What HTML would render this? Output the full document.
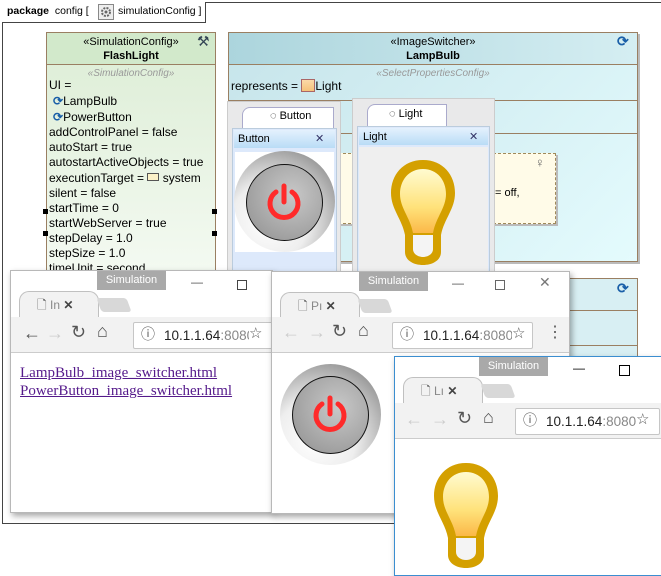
<!DOCTYPE html>
<html><head><meta charset="utf-8"><style>
*{box-sizing:border-box;margin:0;padding:0}
body{width:661px;height:572px;background:#fff;position:relative;overflow:hidden;font-family:"Liberation Sans",sans-serif;font-size:12px;color:#000}
.a{position:absolute}
.t{position:absolute;white-space:nowrap;font-size:12px;line-height:15px}
.win{position:absolute;background:#fff;border:1px solid #b8b8b8;box-shadow:2px 3px 6px rgba(0,0,0,.35);overflow:hidden}
.sim{position:absolute;background:#a9a9a9;color:#fff;font-size:11px;height:19px;line-height:19px;text-align:center;width:69px}
.tb{position:absolute;left:0;right:0;height:36px;background:#f2f2f2;border-bottom:1px solid #ccc}
.addr{position:absolute;height:27px;background:#fff;border:1px solid #c6c6c6;border-radius:2px;font-size:13.5px;line-height:25px;padding-left:30px;color:#222}
</style></head><body>

<!-- package frame -->
<div class="a" style="left:2px;top:2px;width:660px;height:522px;border:1px solid #444"></div>
<div class="a" style="left:2px;top:2px;width:204px;height:21px;border-right:1px solid #444;border-bottom:1px solid #444;background:#fff"></div>
<div class="t" style="left:7px;top:4px;font-size:10.5px"><b>package</b>&nbsp; config [</div>
<div class="a" style="left:98px;top:4px;width:16px;height:16px;border:1px solid #888;background:#eee"></div>
<svg class="a" style="left:100px;top:6px" width="12" height="12" viewBox="0 0 12 12"><circle cx="6" cy="6" r="4" fill="none" stroke="#666" stroke-width="2" stroke-dasharray="2 1.2"/><circle cx="6" cy="6" r="1.5" fill="#666"/></svg>
<div class="t" style="left:118px;top:4px;font-size:10.5px">simulationConfig ]</div>

<!-- FlashLight class -->
<div class="a" style="left:46px;top:32px;width:170px;height:245px;border:1px solid #9a7f62;background:linear-gradient(#dcedd5,#f4faf2)"></div>
<div class="a" style="left:47px;top:33px;width:168px;height:32px;background:#d2e9cb;border-bottom:1px solid #9a7f62"></div>
<div class="t" style="left:47px;top:35px;width:168px;text-align:center;font-size:11px">«SimulationConfig»</div>
<div class="t" style="left:47px;top:49px;width:168px;text-align:center;font-size:11px;font-weight:bold">FlashLight</div>
<div class="t" style="left:197px;top:34px;font-size:14px;color:#345">⚒</div>
<div class="t" style="left:47px;top:66px;width:168px;text-align:center;font-size:10px;font-style:italic;color:#999">«SimulationConfig»</div>
<div class="t" style="left:49px;top:78px">UI =</div>
<div class="t" style="left:53px;top:94px"><span style="color:#1a5fa8;font-weight:bold">⟳</span>LampBulb</div>
<div class="t" style="left:53px;top:110px"><span style="color:#1a5fa8;font-weight:bold">⟳</span>PowerButton</div>
<div class="t" style="left:49px;top:125px">addControlPanel = false</div>
<div class="t" style="left:49px;top:140px">autoStart = true</div>
<div class="t" style="left:49px;top:155px">autostartActiveObjects = true</div>
<div class="t" style="left:49px;top:171px">executionTarget = <span style="display:inline-block;width:12px;height:8px;border:1px solid #555;background:#fbf1c8;vertical-align:1px"></span> system</div>
<div class="t" style="left:49px;top:186px">silent = false</div>
<div class="t" style="left:49px;top:201px">startTime = 0</div>
<div class="t" style="left:49px;top:216px">startWebServer = true</div>
<div class="t" style="left:49px;top:231px">stepDelay = 1.0</div>
<div class="t" style="left:49px;top:246px">stepSize = 1.0</div>
<div class="t" style="left:49px;top:261px">timeUnit = second</div>
<div class="a" style="left:43px;top:209px;width:5px;height:5px;background:#000"></div>
<div class="a" style="left:212px;top:209px;width:5px;height:5px;background:#000"></div>
<div class="a" style="left:43px;top:231px;width:5px;height:5px;background:#000"></div>
<div class="a" style="left:212px;top:231px;width:5px;height:5px;background:#000"></div>

<!-- LampBulb class -->
<div class="a" style="left:228px;top:32px;width:410px;height:230px;border:1px solid #9a7f62;background:linear-gradient(135deg,#c6e4ea,#e4fbfd);box-shadow:2px 2px 0 #bbb"></div>
<div class="a" style="left:229px;top:33px;width:408px;height:32px;background:linear-gradient(90deg,#acd5dd,#d5eef2);border-bottom:1px solid #9a7f62"></div>
<div class="a" style="left:229px;top:100px;width:408px;border-top:1px solid #9a7f62"></div>
<div class="a" style="left:229px;top:133px;width:408px;border-top:1px solid #9a7f62"></div>
<div class="t" style="left:229px;top:35px;width:408px;text-align:center;font-size:11px">«ImageSwitcher»</div>
<div class="t" style="left:229px;top:49px;width:408px;text-align:center;font-size:11px;font-weight:bold">LampBulb</div>
<div class="t" style="left:617px;top:34px;font-size:14px;color:#1a5fa8;font-weight:bold">⟳</div>
<div class="t" style="left:229px;top:66px;width:408px;text-align:center;font-size:10px;font-style:italic;color:#999">«SelectPropertiesConfig»</div>
<div class="t" style="left:231px;top:79px">represents = <span style="display:inline-block;width:14px;height:13px;border:1px solid #a66;background:linear-gradient(#fbd9a8,#f5c27a);vertical-align:-2px"></span>Light</div>
<!-- note -->
<div class="a" style="left:338px;top:153px;width:218px;height:71px;background:#fffbe8;border:1px dashed #a08a5a;box-shadow:2px 2px 0 #bbb"></div>
<div class="t" style="left:462px;top:155px;font-size:11px">age»</div>
<div class="t" style="left:495px;top:186px;font-size:11px">= off,</div>
<div class="t" style="left:535px;top:155px;font-size:13px;color:#666">♀</div>

<!-- second class bottom -->
<div class="a" style="left:560px;top:278px;width:78px;height:80px;border:1px solid #9a7f62;background:#d8eff3"></div>
<div class="a" style="left:560px;top:310px;width:78px;border-top:1px solid #9a7f62"></div>
<div class="a" style="left:560px;top:345px;width:78px;border-top:1px solid #9a7f62"></div>
<div class="t" style="left:617px;top:281px;font-size:14px;color:#1a5fa8;font-weight:bold">⟳</div>

<!-- Button panel -->
<div class="a" style="left:227px;top:101px;width:114px;height:175px;background:#e9e9ea;border:1px solid #ccc"></div>
<div class="a" style="left:242px;top:107px;width:92px;height:22px;background:#fff;border:1px solid #aac;border-bottom:none;border-radius:8px 0 0 0"></div>
<div class="t" style="left:270px;top:109px;font-size:11px">◌ Button</div>
<div class="a" style="left:232px;top:128px;width:105px;height:150px;background:#dde9fb;border:1px solid #bcd"></div>
<div class="a" style="left:234px;top:130px;width:101px;height:18px;background:linear-gradient(#e4f1fd,#b9dcf6)"></div>
<div class="t" style="left:238px;top:132px;font-size:11px">Button</div>
<div class="t" style="left:315px;top:132px;font-size:11px;color:#336">✕</div>
<div class="a" style="left:235px;top:152px;width:99px;height:100px;background:#fff"></div>
<div class="a" style="left:234px;top:151px;width:101px;height:101px;border-radius:50%;background:radial-gradient(circle at 35% 70%,#fff 0,#eee 40%,#999 80%,#666 100%)"></div>
<div class="a" style="left:246px;top:164px;width:77px;height:77px;border-radius:50%;border:1.5px solid #111;background:radial-gradient(circle at 60% 40%,#c8c8c8,#9a9a9a 80%)"></div>
<svg class="a" style="left:264px;top:182px" width="40" height="40" viewBox="0 0 40 40"><path d="M12 10 A14 14 0 1 0 28 10" fill="none" stroke="#ff2a2a" stroke-width="5" stroke-linecap="round"/><path d="M20 4 V20" stroke="#ff2a2a" stroke-width="5" stroke-linecap="round"/></svg>

<!-- Light panel -->
<div class="a" style="left:352px;top:98px;width:143px;height:178px;background:#e9e9ea;border:1px solid #ccc"></div>
<div class="a" style="left:367px;top:104px;width:80px;height:22px;background:#fff;border:1px solid #aac;border-bottom:none;border-radius:8px 0 0 0"></div>
<div class="t" style="left:389px;top:107px;font-size:11px">◌ Light</div>
<div class="a" style="left:357px;top:126px;width:133px;height:150px;background:#dde9fb;border:1px solid #bcd"></div>
<div class="a" style="left:359px;top:128px;width:129px;height:17px;background:linear-gradient(#e4f1fd,#b9dcf6)"></div>
<div class="t" style="left:363px;top:130px;font-size:11px">Light</div>
<div class="t" style="left:469px;top:130px;font-size:11px;color:#336">✕</div>
<div class="a" style="left:359px;top:147px;width:129px;height:129px;background:#efefef"></div>
<svg class="a" style="left:388px;top:157px" width="70" height="110" viewBox="0 0 70 110"><defs><linearGradient id="g1" x1="0" y1="0" x2="0" y2="1"><stop offset="0" stop-color="#fffbd0"/><stop offset=".6" stop-color="#ffe27a"/><stop offset="1" stop-color="#fbb848"/></linearGradient></defs><path d="M35 3C15 3 3 18 3 36C3 52 14 62 17 78L17 95C17 103 25 108 35 108C45 108 53 103 53 95L53 78C56 62 67 52 67 36C67 18 55 3 35 3Z" fill="#d4a000"/><path d="M35 12C21 12 12 23 12 37C12 51 22 60 25 76L45 76C48 60 58 51 58 37C58 23 49 12 35 12Z" fill="url(#g1)"/><path d="M25 78H45V92C45 97 40 100 35 100C30 100 25 97 25 92Z" fill="#f4f4f4"/></svg>

<!-- Browser 1 -->
<div class="win" style="left:10px;top:270px;width:263px;height:243px">
 <div class="sim" style="left:86px;top:0">Simulation</div>
 <div class="t" style="left:180px;top:4px;color:#555">—</div>
 <div class="a" style="left:226px;top:9px;width:10px;height:10px;border:1px solid #444"></div>
 <div class="a" style="left:8px;top:20px;width:80px;height:28px;background:#f2f2f2;border:1px solid #c0c0c0;border-bottom:none;border-radius:10px 10px 0 0"></div>
 <div class="t" style="left:26px;top:27px;color:#555">🗋 <span style="color:#888">In</span> <b style="color:#444">✕</b></div>
 <div class="a" style="left:88px;top:27px;width:30px;height:14px;background:#d8d8d8;border-radius:3px;transform:skewX(20deg)"></div>
 <div class="tb" style="top:46px"></div>
 <div class="t" style="left:12px;top:55px;font-size:18px;color:#555">←</div>
 <div class="t" style="left:35px;top:55px;font-size:18px;color:#ccc">→</div>
 <div class="t" style="left:60px;top:54px;font-size:18px;color:#555">↻</div>
 <div class="t" style="left:86px;top:53px;font-size:18px;color:#555">⌂</div>
 <div class="addr" style="left:122px;top:51px;width:150px">10.1.1.64<span style="color:#888">:8080</span></div>
 <div class="t" style="left:130px;top:56px;font-size:14px;color:#555">ⓘ</div>
 <div class="t" style="left:238px;top:55px;font-size:15px;color:#555;background:#fff">☆</div>
 <div class="t" style="left:9px;top:93px;font-family:'Liberation Serif',serif;font-size:15px;line-height:18px;color:#551a8b;text-decoration:underline">LampBulb_image_switcher.html<br>PowerButton_image_switcher.html</div>
</div>

<!-- Browser 2 -->
<div class="win" style="left:271px;top:271px;width:299px;height:243px">
 <div class="sim" style="left:87px;top:0">Simulation</div>
 <div class="t" style="left:180px;top:4px;color:#555">—</div>
 <div class="a" style="left:223px;top:8px;width:10px;height:10px;border:1px solid #666"></div>
 <div class="t" style="left:267px;top:3px;font-size:14px;color:#777">✕</div>
 <div class="a" style="left:8px;top:20px;width:80px;height:28px;background:#f2f2f2;border:1px solid #c0c0c0;border-bottom:none;border-radius:10px 10px 0 0"></div>
 <div class="t" style="left:26px;top:27px;color:#555">🗋 <span style="color:#888">Pı</span> <b style="color:#444">✕</b></div>
 <div class="a" style="left:88px;top:27px;width:30px;height:14px;background:#d8d8d8;border-radius:3px;transform:skewX(20deg)"></div>
 <div class="tb" style="top:45px"></div>
 <div class="t" style="left:10px;top:53px;font-size:18px;color:#ccc">←</div>
 <div class="t" style="left:36px;top:53px;font-size:18px;color:#ccc">→</div>
 <div class="t" style="left:60px;top:52px;font-size:18px;color:#555">↻</div>
 <div class="t" style="left:86px;top:51px;font-size:18px;color:#555">⌂</div>
 <div class="addr" style="left:120px;top:50px;width:141px">10.1.1.64<span style="color:#888">:8080</span></div>
 <div class="t" style="left:128px;top:55px;font-size:14px;color:#555">ⓘ</div>
 <div class="t" style="left:240px;top:54px;font-size:15px;color:#555;background:#fff">☆</div>
 <div class="t" style="left:275px;top:53px;font-size:16px;color:#555">⋮</div>
 <div class="a" style="left:8px;top:92px;width:101px;height:101px;border-radius:50%;background:radial-gradient(circle at 35% 75%,#fff 0,#eee 40%,#999 80%,#666 100%)"></div>
 <div class="a" style="left:20px;top:104px;width:77px;height:78px;border-radius:50%;border:1.5px solid #111;background:radial-gradient(circle at 60% 40%,#c8c8c8,#9a9a9a 80%)"></div>
 <svg class="a" style="left:38px;top:122px" width="40" height="40" viewBox="0 0 40 40"><path d="M12 10 A14 14 0 1 0 28 10" fill="none" stroke="#ff2a2a" stroke-width="5" stroke-linecap="round"/><path d="M20 4 V20" stroke="#ff2a2a" stroke-width="5" stroke-linecap="round"/></svg>
</div>

<!-- Browser 3 -->
<div class="win" style="left:394px;top:356px;width:270px;height:220px;border-color:#3b8ed0">
 <div class="sim" style="left:84px;top:0">Simulation</div>
 <div class="t" style="left:178px;top:4px;color:#000">—</div>
 <div class="a" style="left:224px;top:8px;width:11px;height:11px;border:1.5px solid #000"></div>
 <div class="a" style="left:8px;top:20px;width:80px;height:28px;background:#f2f2f2;border:1px solid #c0c0c0;border-bottom:none;border-radius:10px 10px 0 0"></div>
 <div class="t" style="left:26px;top:27px;color:#555">🗋 <span style="color:#888">Lı</span> <b style="color:#444">✕</b></div>
 <div class="a" style="left:88px;top:27px;width:30px;height:14px;background:#d8d8d8;border-radius:3px;transform:skewX(20deg)"></div>
 <div class="tb" style="top:46px"></div>
 <div class="t" style="left:10px;top:55px;font-size:18px;color:#ccc">←</div>
 <div class="t" style="left:36px;top:55px;font-size:18px;color:#ccc">→</div>
 <div class="t" style="left:62px;top:54px;font-size:18px;color:#555">↻</div>
 <div class="t" style="left:88px;top:53px;font-size:18px;color:#555">⌂</div>
 <div class="addr" style="left:120px;top:51px;width:145px">10.1.1.64<span style="color:#888">:8080</span></div>
 <div class="t" style="left:128px;top:56px;font-size:14px;color:#555">ⓘ</div>
 <div class="t" style="left:241px;top:55px;font-size:15px;color:#555;background:#fff">☆</div>
 <svg class="a" style="left:36px;top:103px" width="70" height="110" viewBox="0 0 70 110"><defs><linearGradient id="g2" x1="0" y1="0" x2="0" y2="1"><stop offset="0" stop-color="#fffbd0"/><stop offset=".6" stop-color="#ffe27a"/><stop offset="1" stop-color="#fbb848"/></linearGradient></defs><path d="M35 3C15 3 3 18 3 36C3 52 14 62 17 78L17 95C17 103 25 108 35 108C45 108 53 103 53 95L53 78C56 62 67 52 67 36C67 18 55 3 35 3Z" fill="#d4a000"/><path d="M35 12C21 12 12 23 12 37C12 51 22 60 25 76L45 76C48 60 58 51 58 37C58 23 49 12 35 12Z" fill="url(#g2)"/><path d="M25 78H45V92C45 97 40 100 35 100C30 100 25 97 25 92Z" fill="#f4f4f4"/></svg>
</div>
</body></html>
